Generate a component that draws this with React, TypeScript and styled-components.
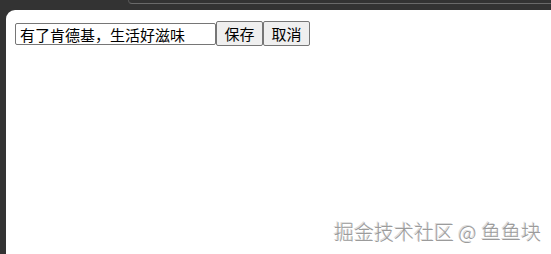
import React from "react";
import styled, { createGlobalStyle } from "styled-components";

const Global = createGlobalStyle`
  html, body { margin: 0; padding: 0; height: 100%; background: #333333; }
  #root { height: 100%; }
`;

const Page = styled.div`
  height: 254px;
  display: flex;
  flex-direction: column;
  background: #333333;
  position: relative;
  overflow: hidden;
`;

const TopBar = styled.div`
  height: 10px;
  flex: none;
  display: flex;
`;

const TabEdge = styled.div`
  margin-left: 128px;
  flex: 1;
  height: 3px;
  border-bottom: 1px solid #6a6a6a;
  border-left: 1px solid #555555;
  border-bottom-left-radius: 10px;
`;

const Panel = styled.div`
  flex: 1;
  margin-left: 6px;
  background: #ffffff;
  border-top-left-radius: 9px;
  padding: 11px 9px;
  display: flex;
  align-items: flex-start;
`;

const Field = styled.input`
  box-sizing: border-box;
  width: 201px;
  height: 22px;
  margin-top: 2px;
  padding: 1px 4px;
  border: 1px solid #767676;
  border-radius: 2px;
  font-family: "Noto Sans CJK SC", sans-serif;
  font-size: 15px;
  font-weight: 400;
  color: #000;
  outline: none;
`;

const Btn = styled.button`
  box-sizing: border-box;
  height: 25px;
  width: 47px;
  padding: 0;
  border: 1px solid #767676;
  border-radius: 2px;
  background: #efefef;
  font-family: "Noto Sans CJK SC", sans-serif;
  font-size: 15px;
  font-weight: 400;
  color: #000;
  line-height: 1;
`;

const Watermark = styled.div`
  position: absolute;
  right: 10px;
  bottom: 8px;
  font-family: "Noto Sans CJK SC", sans-serif;
  font-size: 20px;
  font-weight: 300;
  color: #9b9b9b;
  text-shadow: 1px 1px 0 #ffffff, -1px -1px 0 #dcdcdc;
`;

export default function App() {
  return (
    <>
      <Global />
      <Page>
        <TopBar>
          <TabEdge />
        </TopBar>
        <Panel>
          <Field defaultValue="有了肯德基，生活好滋味" />
          <Btn>保存</Btn>
          <Btn>取消</Btn>
        </Panel>
        <Watermark>掘金技术社区 @ 鱼鱼块</Watermark>
      </Page>
    </>
  );
}
